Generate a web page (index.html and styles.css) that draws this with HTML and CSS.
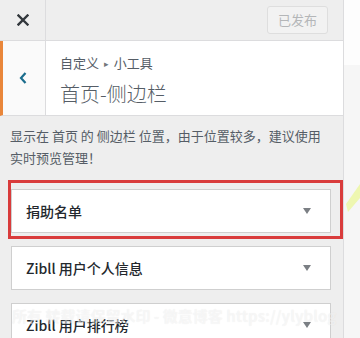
FILE: index.html
```html
<!DOCTYPE html>
<html lang="zh-CN">
<head>
<meta charset="utf-8">
<link rel="stylesheet" href="styles.css">
</head>
<body>
<div class="page">
  <div class="sidebar">
    <div class="topbar">
      <div class="close">
        <svg width="12" height="12" viewBox="0 0 12 12"><path d="M1.5 1.5L10.5 10.5M10.5 1.5L1.5 10.5" stroke="#32373c" stroke-width="2.4" stroke-linecap="square"/></svg>
      </div>
      <div class="publish">已发布</div>
    </div>
    <div class="header">
      <div class="back">
        <svg width="8" height="12" viewBox="0 0 8 12"><path d="M6.5 1L2 6l4.5 5" fill="none" stroke="#1b6d8d" stroke-width="2.2"/></svg>
      </div>
      <div class="titles">
        <div class="crumb">自定义 <span class="tri">▸</span> 小工具</div>
        <div class="title">首页-侧边栏</div>
      </div>
    </div>
    <p class="desc">显示在 首页 的 侧边栏 位置，由于位置较多，建议使用<br>实时预览管理！</p>
    <div class="cards">
      <div class="card"><span>捐助名单</span><i class="arrow"></i></div>
      <div class="card"><span>Zibll 用户个人信息</span><i class="arrow"></i></div>
      <div class="card"><span>Zibll 用户排行榜</span><i class="arrow"></i></div>
    </div>
  </div>
  <div class="preview">
    <div class="preview-top"></div>
    <svg class="slash" width="16" height="40" viewBox="0 0 16 40"><polygon points="2,28 16,8 16,22 4,36" fill="#eef7b0"/></svg>
  </div>
  <div class="highlight"></div>
  <div class="watermark">所有 转载请保留水印 - 微意博客 https://ylyblog</div>
</div>
</body>
</html>
```

FILE: styles.css
```css
* { box-sizing: border-box; }
html, body { margin: 0; padding: 0; }
body {
  width: 360px;
  height: 338px;
  overflow: hidden;
  font-family: "Noto Sans CJK SC", "Noto Sans", sans-serif;
  background: #f6f6f6;
}
.page {
  position: relative;
  display: flex;
  width: 360px;
  height: 338px;
}
.sidebar {
  width: 344px;
  height: 338px;
  flex: none;
  background: #eeeeee;
  border-right: 1px solid #dcdcde;
}
.topbar {
  display: flex;
  align-items: center;
  height: 41px;
  border-bottom: 1px solid #dcdcde;
}
.close {
  width: 46px;
  height: 40px;
  border-right: 1px solid #dcdcde;
  display: flex;
  align-items: center;
  justify-content: center;
}
.publish {
  margin-left: auto;
  margin-right: 15px;
  width: 61px;
  height: 28px;
  border: 1px solid #dedede;
  border-radius: 3px;
  background: #f2f2f2;
  color: #b4b6b8;
  font-size: 13px;
  line-height: 26px;
  text-align: center;
}
.header {
  display: flex;
  height: 75px;
  background: #fff;
  border-left: 3px solid #e9863a;
  border-bottom: 1px solid #dcdcde;
}
.back {
  width: 43px;
  background: #fafafa;
  border-right: 1px solid #dcdcde;
  display: flex;
  align-items: center;
  justify-content: center;
  padding-right: 2px;
}
.titles {
  padding: 13px 0 0 14px;
  color: #555d66;
}
.crumb {
  font-size: 13px;
  line-height: 18px;
}
.tri {
  font-size: 9px;
  color: #72777c;
  margin: 0 2px;
  vertical-align: 1px;
}
.title {
  margin-top: 7px;
  font-size: 20px;
  line-height: 28px;
  font-weight: 300;
}
.desc {
  margin: 0;
  padding: 9px 10px 0 10px;
  font-size: 13px;
  line-height: 22px;
  color: #555d66;
}
.cards {
  margin-top: 20px;
  padding: 0 12px 0 11px;
  display: flex;
  flex-direction: column;
  gap: 13px;
}
.card {
  height: 44px;
  background: #fff;
  border: 1px solid #cfcfcf;
  display: flex;
  align-items: center;
  padding: 0 19px 0 14px;
  font-size: 14px;
  font-weight: 500;
  color: #23282d;
}
.arrow {
  margin-left: auto;
  width: 0;
  height: 0;
  border-left: 4.5px solid transparent;
  border-right: 4.5px solid transparent;
  border-top: 6px solid #7b7f84;
}
.preview {
  position: relative;
  flex: 1;
  height: 338px;
  background: #f6f6f6;
}
.preview-top {
  height: 65px;
  background: #fdfdfd;
}
.slash {
  position: absolute;
  left: 0;
  top: 176px;
}
.highlight {
  position: absolute;
  left: 8px;
  top: 180px;
  width: 335px;
  height: 59px;
  border: 3px solid #d93c3c;
}
.watermark {
  position: absolute;
  left: 12px;
  top: 305px;
  white-space: nowrap;
  font-size: 15px;
  font-weight: 700;
  color: rgba(255, 255, 255, 0.5);
  text-shadow: 0 0 1px rgba(0, 0, 0, 0.08);
  pointer-events: none;
}
```
